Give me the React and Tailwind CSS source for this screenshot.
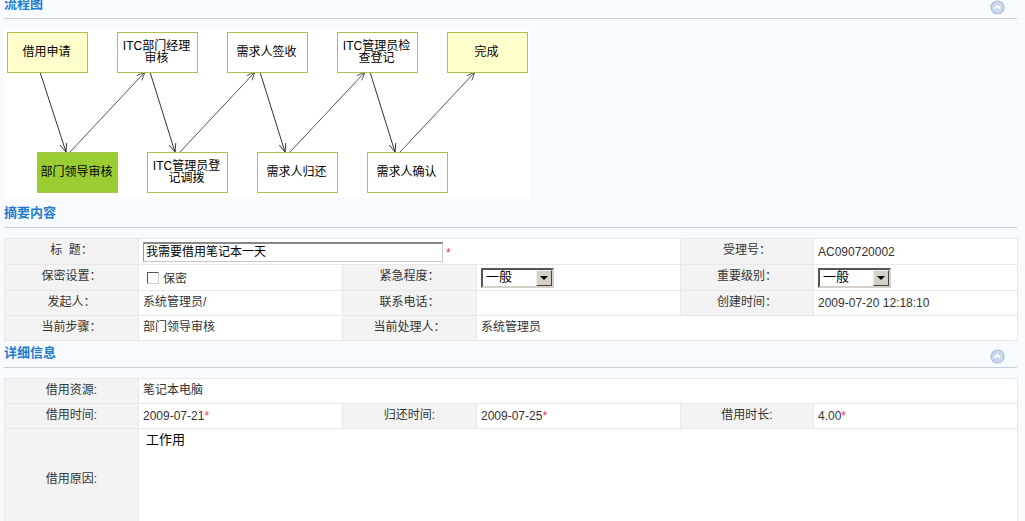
import React from 'react'

const topNodes = [
  { left: 3, text: '借用申请', fill: 'bg-[#ffffcc]' },
  { left: 113, text: 'ITC部门经理审核', fill: 'bg-white' },
  { left: 223, text: '需求人签收', fill: 'bg-white' },
  { left: 333, text: 'ITC管理员检查登记', fill: 'bg-white' },
  { left: 443, text: '完成', fill: 'bg-[#ffffcc]' },
]

const bottomNodes = [
  { left: 33, text: '部门领导审核', fill: 'bg-[#9acd32]' },
  { left: 143, text: 'ITC管理员登记调拨', fill: 'bg-white' },
  { left: 253, text: '需求人归还', fill: 'bg-white' },
  { left: 363, text: '需求人确认', fill: 'bg-white' },
]

const downArrows = [
  [36, 43, 62, 123],
  [146, 43, 171, 123],
  [256, 43, 281, 123],
  [366, 43, 391, 123],
]

const upArrows = [
  [66, 123, 141, 43],
  [176, 123, 251, 43],
  [286, 123, 361, 43],
  [396, 123, 471, 43],
]

// open V head at the end of a line
const arrowHead = (x1, y1, x2, y2) => {
  const angle = Math.atan2(y2 - y1, x2 - x1)
  const size = 9
  const a = angle + 2.75
  const b = angle - 2.75
  return `M${x2 + size * Math.cos(a)} ${y2 + size * Math.sin(a)}L${x2} ${y2}L${x2 + size * Math.cos(b)} ${y2 + size * Math.sin(b)}`
}

const FlowNode = ({ node, top }) => (
  <div
    className={`absolute flex h-[41px] w-[81px] items-center justify-center border border-[#a9c14f] pb-[1px] pl-[2px] pr-[4px] text-center text-[12px] leading-[12px] text-black ${node.fill}`}
    style={{ left: node.left, top }}
  >
    {node.text}
  </div>
)

const CollapseIcon = () => (
  <svg width="15" height="15" viewBox="0 0 15 15" className="mb-[3px] mr-[12px]">
    <circle cx="7.5" cy="7.5" r="6.5" fill="#ccd9ec" stroke="#a9bdd9" strokeWidth="1.2" />
    <path d="M4.8 8.6L7.5 5.9L10.2 8.6" fill="none" stroke="#ffffff" strokeWidth="2" />
  </svg>
)

const SectionHeader = ({ title, height, collapsible }) => (
  <div
    className="flex items-end justify-between overflow-hidden border-b border-[#c5d1e2]"
    style={{ height }}
  >
    <h2 className="pb-[8px] text-[13px] font-bold leading-[13px] text-[#1f7ccf]">{title}</h2>
    {collapsible && <CollapseIcon />}
  </div>
)

const Label = ({ children, high }) => (
  <td
    className={`border border-[#e8e8e8] bg-[#f3f3f3] p-0 text-center text-[12px] text-[#333] ${high ? 'pb-[4px]' : 'pb-[2px]'}`}
  >
    {children}
  </td>
)

// latin values sit a pixel lower than the chinese ones in the reference
const Value = ({ children, colSpan, latin }) => (
  <td
    colSpan={colSpan}
    className={`border border-[#e8e8e8] bg-white p-0 pl-[4px] text-[12px] text-[#333] ${latin ? '' : 'pb-[2px]'}`}
  >
    {children}
  </td>
)

const Star = () => <span className="text-[#f0305a]">*</span>

const Select = () => (
  <div className="flex h-[20px] w-[73px] border-2 border-t-[#555] border-r-[#d4d0c8] border-b-[#d4d0c8] border-l-[#555] bg-white">
    <span className="flex-1 pl-[3px] text-[13px] leading-[14px] text-black">一般</span>
    <span className="flex w-[16px] items-center justify-center border border-t-[#f2f0ec] border-r-[#444] border-b-[#444] border-l-[#f2f0ec] bg-[#d4d0c8]">
      <svg width="8" height="4" viewBox="0 0 8 4">
        <path d="M0 0H8L4 4Z" fill="#000000" />
      </svg>
    </span>
  </div>
)

const Columns = () => (
  <colgroup>
    <col className="w-[134px]" />
    <col className="w-[204px]" />
    <col className="w-[134px]" />
    <col className="w-[204px]" />
    <col className="w-[133px]" />
    <col className="w-[204px]" />
  </colgroup>
)

export default function App() {
  return (
    <div className="h-[521px] w-[1025px] overflow-hidden bg-[#f7fafe] pl-[4px] pr-[8px] font-['Liberation_Sans','Noto_Sans_CJK_SC',sans-serif]">
      <SectionHeader title="流程图" height={19} collapsible />

      <div className="relative mt-[10px] h-[169px] w-[526px] bg-white">
        <svg width="526" height="169" className="absolute left-0 top-0">
          {downArrows.map(([x1, y1, x2, y2]) => (
            <g key={x1} fill="none" stroke="#333333">
              <path d={`M${x1} ${y1}L${x2} ${y2}`} />
              <path d={arrowHead(x1, y1, x2, y2)} />
            </g>
          ))}
          {upArrows.map(([x1, y1, x2, y2]) => (
            <g key={x1} fill="none" stroke="#555555">
              <path d={`M${x1} ${y1}L${x2} ${y2}`} />
              <path d={arrowHead(x1, y1, x2, y2)} />
            </g>
          ))}
        </svg>
        {topNodes.map((node) => (
          <FlowNode key={node.left} node={node} top={3} />
        ))}
        {bottomNodes.map((node) => (
          <FlowNode key={node.left} node={node} top={123} />
        ))}
      </div>

      <SectionHeader title="摘要内容" height={30} />

      <table className="mt-[10px] w-[1013px] table-fixed border-collapse">
        <Columns />
        <tbody>
          <tr className="h-[26px]">
            <Label high>标&nbsp;&nbsp;题：</Label>
            <td colSpan={3} className="border border-[#e8e8e8] bg-white p-0 pl-[4px] text-[12px]">
              <div className="flex items-center">
                <input
                  readOnly
                  value="我需要借用笔记本一天"
                  className="h-[20px] w-[300px] border border-t-2 border-t-[#888] border-r-[#c8c8c8] border-b-[#c8c8c8] border-l-[#999] bg-white pb-[3px] pl-[2px] text-[12px] text-black outline-none"
                />
                <span className="ml-[3px] mt-[2px]">
                  <Star />
                </span>
              </div>
            </td>
            <Label high>受理号：</Label>
            <Value latin>AC090720002</Value>
          </tr>
          <tr className="h-[26px]">
            <Label high>保密设置：</Label>
            <Value latin>
              <label className="ml-[4px] flex items-center">
                <span className="h-[12px] w-[12px] border border-t-[#555] border-r-[#ccc] border-b-[#ccc] border-l-[#555] bg-white" />
                <span className="ml-[4px] mt-[2px]">保密</span>
              </label>
            </Value>
            <Label high>紧急程度：</Label>
            <Value latin>
              <Select />
            </Value>
            <Label high>重要级别：</Label>
            <Value latin>
              <Select />
            </Value>
          </tr>
          <tr className="h-[25px]">
            <Label>发起人：</Label>
            <Value>系统管理员/</Value>
            <Label>联系电话：</Label>
            <Value />
            <Label>创建时间：</Label>
            <Value latin>2009-07-20 12:18:10</Value>
          </tr>
          <tr className="h-[25px]">
            <Label>当前步骤：</Label>
            <Value>部门领导审核</Value>
            <Label>当前处理人：</Label>
            <Value colSpan={3}>系统管理员</Value>
          </tr>
        </tbody>
      </table>

      <SectionHeader title="详细信息" height={27} collapsible />

      <table className="mt-[10px] w-[1013px] table-fixed border-collapse">
        <Columns />
        <tbody>
          <tr className="h-[25px]">
            <Label>借用资源:</Label>
            <Value colSpan={5}>笔记本电脑</Value>
          </tr>
          <tr className="h-[25px]">
            <Label>借用时间:</Label>
            <Value latin>
              2009-07-21
              <Star />
            </Value>
            <Label>归还时间:</Label>
            <Value latin>
              2009-07-25
              <Star />
            </Value>
            <Label>借用时长:</Label>
            <Value latin>
              4.00
              <Star />
            </Value>
          </tr>
          <tr className="h-[102px]">
            <Label>借用原因:</Label>
            <td colSpan={5} className="border border-[#e8e8e8] bg-white p-0 pl-[7px] pt-[1px] align-top text-[13px] text-black">
              工作用
            </td>
          </tr>
        </tbody>
      </table>
    </div>
  )
}
